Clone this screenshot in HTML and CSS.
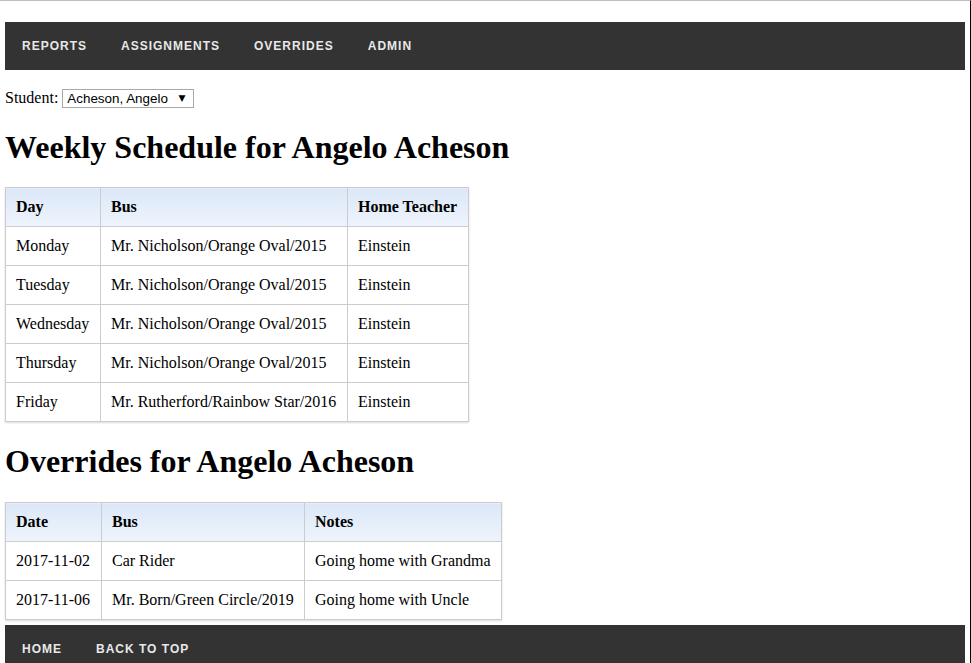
FILE: index.html
```html
<!DOCTYPE html>
<html>
<head>
<meta charset="utf-8">
<title>Weekly Schedule</title>
<link rel="stylesheet" href="styles.css">
</head>
<body>
<div class="frame">
  <nav class="topnav">
    <a href="#">Reports</a>
    <a href="#">Assignments</a>
    <a href="#">Overrides</a>
    <a href="#">Admin</a>
  </nav>
  <div class="picker">
    <label for="student">Student:</label>
    <span class="select-wrap">
      <select id="student" class="student-select">
        <option>Acheson, Angelo</option>
      </select>
      <span class="select-arrow">▼</span>
    </span>
  </div>
  <h1 class="heading">Weekly Schedule for Angelo Acheson</h1>
  <table class="grid">
    <thead>
      <tr><th class="c-day">Day</th><th class="c-bus">Bus</th><th class="c-teacher">Home Teacher</th></tr>
    </thead>
    <tbody>
      <tr><td>Monday</td><td>Mr. Nicholson/Orange Oval/2015</td><td>Einstein</td></tr>
      <tr><td>Tuesday</td><td>Mr. Nicholson/Orange Oval/2015</td><td>Einstein</td></tr>
      <tr><td>Wednesday</td><td>Mr. Nicholson/Orange Oval/2015</td><td>Einstein</td></tr>
      <tr><td>Thursday</td><td>Mr. Nicholson/Orange Oval/2015</td><td>Einstein</td></tr>
      <tr><td>Friday</td><td>Mr. Rutherford/Rainbow Star/2016</td><td>Einstein</td></tr>
    </tbody>
  </table>
  <h2 class="heading heading-2">Overrides for Angelo Acheson</h2>
  <table class="grid">
    <thead>
      <tr><th class="c-date">Date</th><th class="c-bus2">Bus</th><th class="c-notes">Notes</th></tr>
    </thead>
    <tbody>
      <tr><td>2017-11-02</td><td>Car Rider</td><td>Going home with Grandma</td></tr>
      <tr><td>2017-11-06</td><td>Mr. Born/Green Circle/2019</td><td>Going home with Uncle</td></tr>
    </tbody>
  </table>
  <nav class="footnav">
    <a href="#">Home</a>
    <a href="#">Back to top</a>
  </nav>
</div>
</body>
</html>
```
FILE: styles.css
```css
html, body {
  margin: 0;
  padding: 0;
  background: #fff;
}
body {
  font-family: "Liberation Serif", "Times New Roman", serif;
  font-size: 16px;
  color: #000;
}
.frame {
  border-top: 1px solid #bdbdbd;
  border-right: 1px solid #000;
  padding: 0 5px;
  min-height: 662px;
  box-sizing: border-box;
}
.topnav, .footnav {
  background: #333;
  display: flex;
  align-items: center;
  height: 48px;
}
.topnav {
  margin-top: 21px;
}
.footnav {
  margin-top: 5px;
}
.topnav a, .footnav a {
  font-family: "Liberation Sans", Arial, sans-serif;
  font-weight: bold;
  font-size: 12px;
  letter-spacing: 1px;
  text-transform: uppercase;
  color: #e8e8e8;
  text-decoration: none;
  padding: 0 17px;
}
.picker {
  margin-top: 18px;
  display: flex;
  align-items: center;
  gap: 4px;
  height: 20px;
}
.select-wrap {
  position: relative;
  display: inline-flex;
}
.student-select {
  -webkit-appearance: none;
  appearance: none;
  font-family: "Liberation Sans", Arial, sans-serif;
  font-size: 13.4px;
  height: 19px;
  width: 132px;
  padding: 0 4px;
  border: 1px solid #a9a9a9;
  background: #fff;
  color: #000;
  border-radius: 0;
  line-height: 17px;
}
.select-arrow {
  position: absolute;
  right: 9px;
  top: 3px;
  font-family: "DejaVu Sans", sans-serif;
  font-size: 9px;
  line-height: 12px;
  color: #000;
  pointer-events: none;
}
.heading {
  font-size: 32px;
  font-weight: bold;
  margin: 21px 0;
  line-height: 37px;
}
.heading-2 {
  margin-bottom: 22px;
}
.grid {
  border-collapse: collapse;
  border: 1px solid #ccc;
  box-shadow: 0 1px 2px rgba(0,0,0,0.15);
}
.grid th, .grid td {
  border: 1px solid #ccc;
  padding: 10px 10px;
  text-align: left;
  line-height: 18px;
  font-size: 16px;
  white-space: nowrap;
}
.grid th {
  background: linear-gradient(#dbe7f8, #eef4fc);
  font-weight: bold;
}
.c-day { width: 74px; }
.c-bus { width: 226px; }
.c-teacher { width: 100px; }
.c-date { width: 75px; }
.c-bus2 { width: 182px; }
.c-notes { width: 176px; }
```
